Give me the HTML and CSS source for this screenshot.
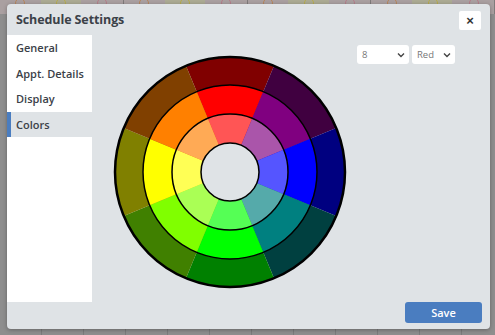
FILE: index.html
```html
<!DOCTYPE html>
<html lang="en">
<head>
  <meta charset="UTF-8" />
  <meta name="viewport" content="width=device-width, initial-scale=1.0" />
  <title>Schedule Settings</title>
  <link rel="stylesheet" href="styles.css">
</head>
<body>
  <!-- dimmed calendar behind the dialog -->
  <div class="backdrop">
    <div class="cal-head">
      <div class="cal-col"><span class="dot orange"></span><span class="dot yellow"></span><span class="dot pink"></span></div>
      <div class="cal-col"><span class="dot orange"></span><span class="dot yellow"></span><span class="dot pink"></span></div>
      <div class="cal-col"><span class="dot orange"></span><span class="dot yellow"></span><span class="dot pink"></span></div>
      <div class="cal-col"><span class="dot orange"></span><span class="dot yellow"></span><span class="dot pink"></span></div>
    </div>
    <div class="cal-grid"></div>
  </div>

  <div class="modal">
    <div class="modal-header">
      <h2>Schedule Settings</h2>
      <button class="close-btn" type="button">&times;</button>
    </div>

    <div class="modal-body">
      <ul class="side-nav">
        <li>General</li>
        <li>Appt. Details</li>
        <li>Display</li>
        <li class="active">Colors</li>
      </ul>

      <div class="color-pane">
        <svg class="wheel" width="240" height="240" viewBox="0 0 240 240">
          <!-- outer ring -->
          <path d="M120 120 L75.99 13.75 A115 115 0 0 1 164.01 13.75 Z" fill="#800000"/>
          <path d="M120 120 L164.01 13.75 A115 115 0 0 1 226.25 75.99 Z" fill="#400040"/>
          <path d="M120 120 L226.25 75.99 A115 115 0 0 1 226.25 164.01 Z" fill="#000080"/>
          <path d="M120 120 L226.25 164.01 A115 115 0 0 1 164.01 226.25 Z" fill="#004040"/>
          <path d="M120 120 L164.01 226.25 A115 115 0 0 1 75.99 226.25 Z" fill="#008000"/>
          <path d="M120 120 L75.99 226.25 A115 115 0 0 1 13.75 164.01 Z" fill="#408000"/>
          <path d="M120 120 L13.75 164.01 A115 115 0 0 1 13.75 75.99 Z" fill="#808000"/>
          <path d="M120 120 L13.75 75.99 A115 115 0 0 1 75.99 13.75 Z" fill="#804000"/>
          <!-- middle ring -->
          <path d="M120 120 L86.71 39.62 A87 87 0 0 1 153.29 39.62 Z" fill="#ff0000"/>
          <path d="M120 120 L153.29 39.62 A87 87 0 0 1 200.38 86.71 Z" fill="#800080"/>
          <path d="M120 120 L200.38 86.71 A87 87 0 0 1 200.38 153.29 Z" fill="#0000ff"/>
          <path d="M120 120 L200.38 153.29 A87 87 0 0 1 153.29 200.38 Z" fill="#008080"/>
          <path d="M120 120 L153.29 200.38 A87 87 0 0 1 86.71 200.38 Z" fill="#00ff00"/>
          <path d="M120 120 L86.71 200.38 A87 87 0 0 1 39.62 153.29 Z" fill="#80ff00"/>
          <path d="M120 120 L39.62 153.29 A87 87 0 0 1 39.62 86.71 Z" fill="#ffff00"/>
          <path d="M120 120 L39.62 86.71 A87 87 0 0 1 86.71 39.62 Z" fill="#ff8000"/>
          <!-- inner ring -->
          <path d="M120 120 L97.80 66.41 A58 58 0 0 1 142.20 66.41 Z" fill="#ff5555"/>
          <path d="M120 120 L142.20 66.41 A58 58 0 0 1 173.59 97.80 Z" fill="#aa55aa"/>
          <path d="M120 120 L173.59 97.80 A58 58 0 0 1 173.59 142.20 Z" fill="#5555ff"/>
          <path d="M120 120 L173.59 142.20 A58 58 0 0 1 142.20 173.59 Z" fill="#55aaaa"/>
          <path d="M120 120 L142.20 173.59 A58 58 0 0 1 97.80 173.59 Z" fill="#55ff55"/>
          <path d="M120 120 L97.80 173.59 A58 58 0 0 1 66.41 142.20 Z" fill="#aaff55"/>
          <path d="M120 120 L66.41 142.20 A58 58 0 0 1 66.41 97.80 Z" fill="#ffff55"/>
          <path d="M120 120 L66.41 97.80 A58 58 0 0 1 97.80 66.41 Z" fill="#ffaa55"/>
          <!-- ring outlines -->
          <circle cx="120" cy="120" r="115" fill="none" stroke="#000" stroke-width="2.5"/>
          <circle cx="120" cy="120" r="87" fill="none" stroke="#000" stroke-width="1.5"/>
          <circle cx="120" cy="120" r="58" fill="none" stroke="#000" stroke-width="1.5"/>
          <circle cx="120" cy="120" r="29" fill="#dfe3e6" stroke="#000" stroke-width="1.5"/>
        </svg>

        <div class="pickers">
          <div class="picker count">
            <span>8</span>
            <svg width="8" height="6" viewBox="0 0 8 6"><path d="M1 1.5 L4 4.5 L7 1.5" fill="none" stroke="#444" stroke-width="1.4"/></svg>
          </div>
          <div class="picker base">
            <span>Red</span>
            <svg width="8" height="6" viewBox="0 0 8 6"><path d="M1 1.5 L4 4.5 L7 1.5" fill="none" stroke="#444" stroke-width="1.4"/></svg>
          </div>
        </div>
      </div>
    </div>

    <div class="modal-footer">
      <button class="save-btn" type="button">Save</button>
    </div>
  </div>
</body>
</html>
```

FILE: styles.css
```css
body {
  margin: 0;
  font-family: "Open Sans", Arial, sans-serif;
  background: #8d8d8d;
  overflow: hidden;
}
.backdrop {
  height: 335px;
  display: flex;
  flex-direction: column;
}
.cal-head {
  display: flex;
  height: 14px;
  background: #a9a2a2;
}
.cal-col {
  flex: 1;
  display: flex;
  justify-content: space-around;
  border-right: 1px solid #7f7b7b;
  background: linear-gradient(90deg, #aaa0a1 0 33%, #acab94 33% 66%, #aaa0a1 66%);
}
.dot {
  width: 8px;
  height: 8px;
  border-radius: 50%;
  margin-top: -2px;
  border: 1px solid;
}
.dot.orange { border-color: #b8875c; }
.dot.yellow { border-color: #b8ad4c; }
.dot.pink { border-color: #b67d8a; }
.cal-grid {
  flex: 1;
  background: repeating-linear-gradient(90deg, #8e8e8e 0 41px, #7c7c7c 41px 42px);
}

.modal {
  position: absolute;
  left: 7px;
  top: 4px;
  width: 483px;
  height: 325px;
  background: #dfe3e6;
  border-radius: 4px;
  box-shadow: 0 1px 4px rgba(0, 0, 0, 0.3);
  display: flex;
  flex-direction: column;
}
.modal-header {
  height: 31px;
  display: flex;
  align-items: center;
  justify-content: space-between;
  padding: 0 9px 0 9px;
}
.modal-header h2 {
  margin: 0;
  font-size: 12.5px;
  font-weight: 700;
  letter-spacing: -0.1px;
  color: #3b4148;
}
.close-btn {
  width: 22px;
  height: 19px;
  margin-top: 1px;
  border: none;
  border-radius: 2px;
  background: #fff;
  color: #333;
  font-family: Arial, sans-serif;
  font-size: 13px;
  font-weight: 700;
  line-height: 19px;
  padding: 0;
}

.modal-body {
  display: flex;
  height: 267px;
}
.side-nav {
  list-style: none;
  margin: 0;
  padding: 0;
  width: 85px;
  background: #fff;
}
.side-nav li {
  height: 25.5px;
  line-height: 25.5px;
  padding-left: 9px;
  font-size: 11px;
  font-weight: 600;
  color: #3b4148;
  white-space: nowrap;
}
.side-nav li.active {
  background: #dfe3e6;
  border-left: 4px solid #4a7dc0;
  padding-left: 5px;
}

.color-pane {
  flex: 1;
  display: flex;
  align-items: flex-start;
}
.wheel {
  margin: 17px 0 0 18px;
}
.pickers {
  display: flex;
  gap: 3px;
  margin: 10px 0 0 7px;
}
.picker {
  height: 19px;
  background: #fff;
  border-radius: 3px;
  display: flex;
  align-items: center;
  justify-content: space-between;
  padding: 0 4px 0 5px;
  box-sizing: border-box;
  font-size: 9.5px;
  color: #777;
}
.picker.count { width: 52px; }
.picker.base { width: 43px; }

.modal-footer {
  display: flex;
  justify-content: flex-end;
  padding-right: 8px;
}
.save-btn {
  width: 77px;
  height: 21px;
  border: none;
  border-radius: 3px;
  background: #4a7dc0;
  color: #fff;
  font-family: "Open Sans", Arial, sans-serif;
  font-size: 11px;
  font-weight: 600;
  padding: 0;
}
```
